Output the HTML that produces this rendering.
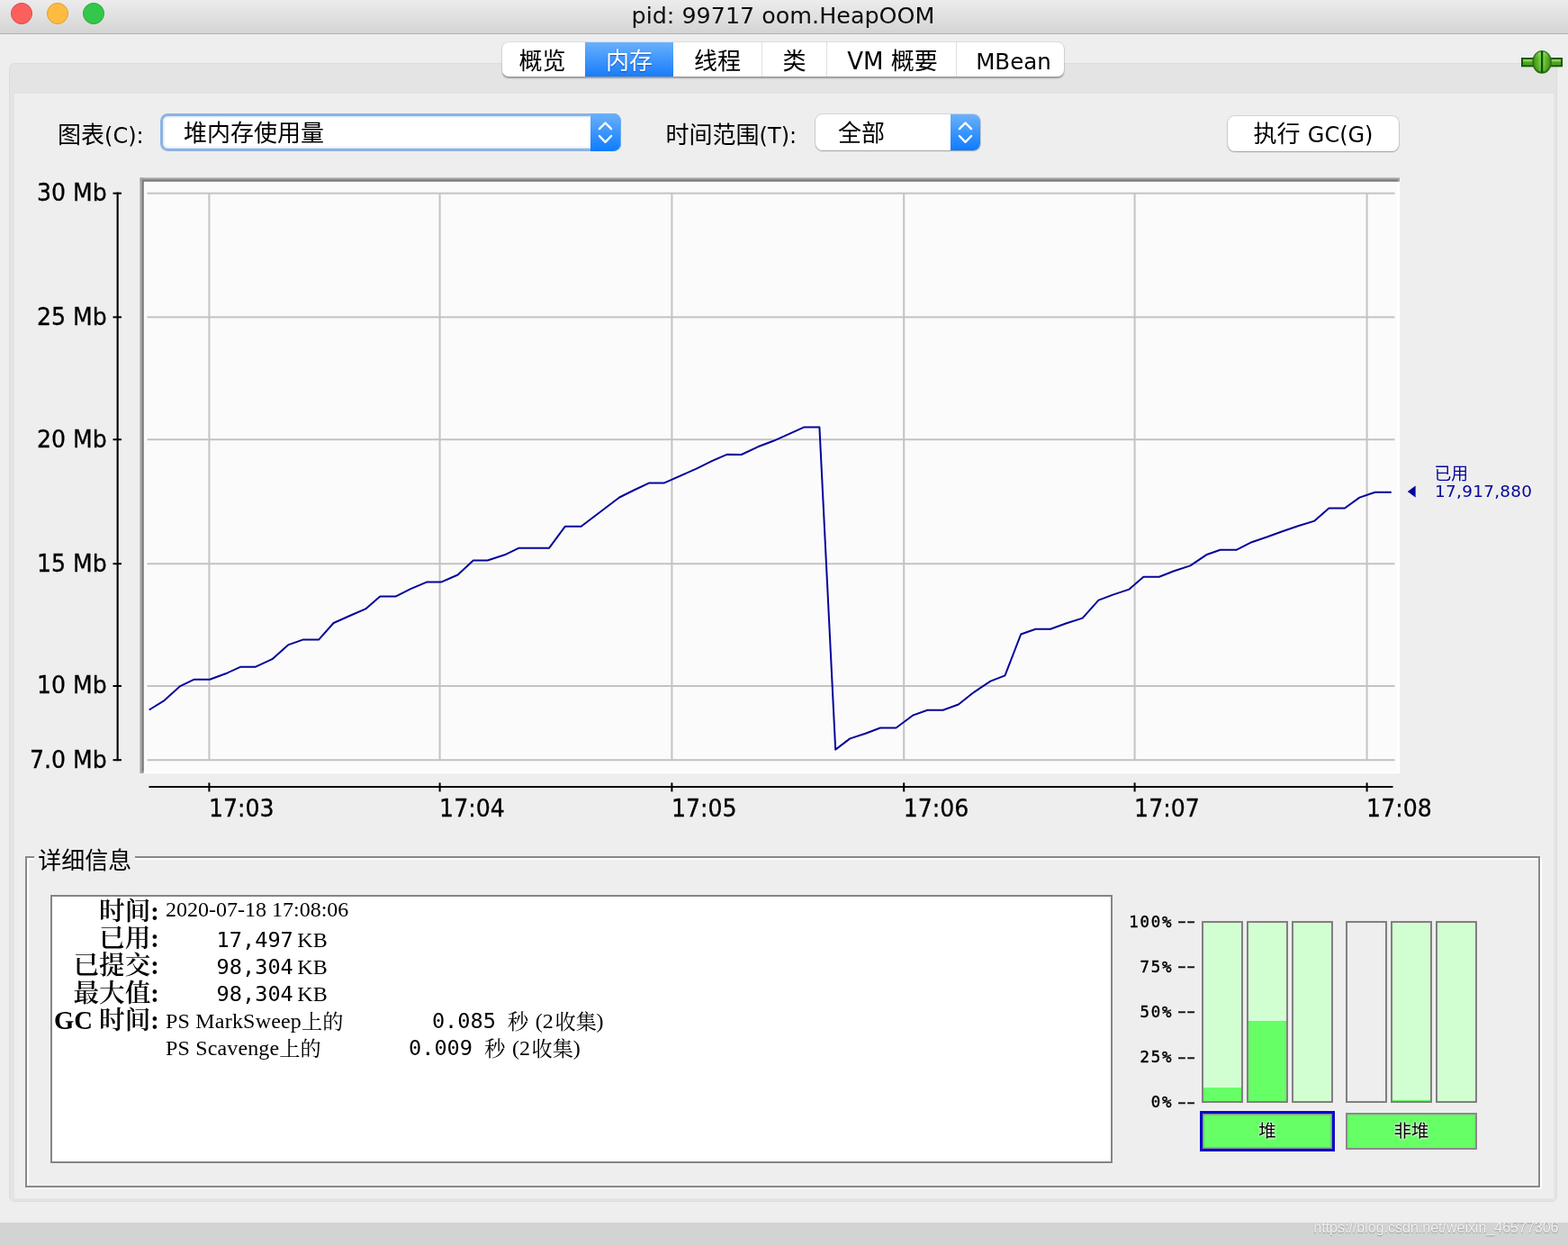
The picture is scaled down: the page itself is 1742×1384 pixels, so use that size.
<!DOCTYPE html>
<html lang="zh">
<head>
<meta charset="utf-8">
<title>pid: 99717 oom.HeapOOM</title>
<style>
html,body{margin:0;padding:0;}
body{width:1742px;height:1384px;overflow:hidden;background:#eeeeee;position:relative;
  font-family:"DejaVu Sans","Liberation Sans","Noto Sans CJK SC",sans-serif;color:#000;}
.abs{position:absolute;}
.ui{font-family:"DejaVu Sans","Liberation Sans","Noto Sans CJK SC",sans-serif;font-size:26px;line-height:30px;white-space:nowrap;}
.lat{font-size:24px;}
/* title bar */
#titlebar{left:0;top:0;width:1742px;height:37px;background:linear-gradient(#ececec,#d4d4d4);border-bottom:1px solid #b1b1b1;}
#title{left:-1px;top:0;width:1742px;text-align:center;font-size:25.4px;line-height:34px;color:#0c0c0c;white-space:nowrap;}
.tl{width:24px;height:24px;border-radius:50%;top:3px;box-sizing:border-box;}
/* tab panel */
#panel{left:10px;top:70px;width:1720px;height:1265px;background:#e4e4e4;border-radius:6px;box-sizing:border-box;border:1px solid #dcdcdc;}
#inner{left:16px;top:104px;width:1710px;height:1227px;background:#eeeeee;}
/* tabs */
#tabs{left:558px;top:46.6px;width:624px;height:38.8px;border-radius:7px;background:#fff;box-shadow:0 0 0 0.7px rgba(0,0,0,.09),0 1.2px 1.6px rgba(0,0,0,.3);overflow:hidden;}
.tab{top:0;height:38.8px;text-align:center;font-size:26px;line-height:43.6px;white-space:nowrap;box-sizing:border-box;border-left:1px solid #dfdfdf;}
.tab.first{border-left:none;}
.tab.sel{background:linear-gradient(#6ab1fb,#4399fb 45%,#1a7cfa);color:#fff;border-left:none;text-shadow:0 1px 1.5px rgba(0,40,120,.55);}
/* combos */
.combo{background:#fff;border-radius:7px;box-sizing:border-box;box-shadow:0 0 0 1px rgba(0,0,0,.14),0 1.5px 2px rgba(0,0,0,.2);}
.combo .btn{position:absolute;right:0;top:0;bottom:0;width:34px;border-radius:0 7px 7px 0;background:linear-gradient(#58a7fb,#1776f8);}
.combo .txt{position:absolute;top:0;font-size:26px;line-height:40px;white-space:nowrap;}
</style>
</head>
<body><div id="root" style="position:absolute;left:0;top:0;width:1742px;height:1384px;will-change:transform;">
<div id="titlebar" class="abs"></div>
<div class="abs tl" style="left:12px;background:#fc605c;border:1px solid #df4744;"></div>
<div class="abs tl" style="left:52px;background:#fdbc40;border:1px solid #de9f34;"></div>
<div class="abs tl" style="left:92px;background:#34c84a;border:1px solid #27aa35;"></div>
<div id="title" class="abs">pid: 99717 oom.HeapOOM</div>

<div id="panel" class="abs"></div>
<div id="inner" class="abs"></div>

<div id="tabs" class="abs">
  <div class="abs tab first" style="left:0;width:89px;">概览</div>
  <div class="abs tab sel" style="left:92px;width:98px;">内存</div>
  <div class="abs tab" style="left:190px;width:98px;border-left:none;">线程</div>
  <div class="abs tab" style="left:288px;width:72px;">类</div>
  <div class="abs tab" style="left:360px;width:144px;padding-left:2px;">VM 概要</div>
  <div class="abs tab" style="left:504px;width:120px;font-size:24.5px;padding-left:7px;">MBean</div>
</div>

<!-- SECTION:controls -->
<div class="abs ui" style="left:64px;top:134.6px;">图表<span class="lat">(C):</span></div>
<div class="abs" style="left:178px;top:126px;width:512px;height:42px;box-sizing:border-box;border:3px solid #8cb3e3;border-radius:8.5px;background:#fff;box-shadow:inset 0 0 2.5px 1px #cde0f7;">
  <div class="abs ui" style="left:23px;top:4.2px;">堆内存使用量</div>
  <div class="abs" style="right:-3px;top:-3px;width:34px;height:42px;border-radius:0 8.5px 8.5px 0;background:linear-gradient(#6cb2fb,#3f98fd 45%,#0d7cff);box-shadow:inset -1px 0 0 #6aaaf3;"><svg class="abs" style="left:0;top:0" width="34" height="42" viewBox="0 0 34 42"><path d="M9.9 17.2 L16.5 10.5 L23.1 17.2 M9.9 25 L16.5 31.8 L23.1 25" fill="none" stroke="#fff" stroke-width="2.4" stroke-linecap="round" stroke-linejoin="round"/></svg></div>
</div>
<div class="abs ui" style="left:739.6px;top:134.6px;">时间范围<span class="lat">(T):</span></div>
<div class="abs" style="left:906px;top:127px;width:183px;height:40px;border-radius:7.5px;background:#fff;box-shadow:0 0 0 0.8px rgba(0,0,0,.15),0 1px 1.3px rgba(0,0,0,.24);">
  <div class="abs ui" style="left:25px;top:6.2px;">全部</div>
  <div class="abs" style="right:0;top:0;width:33px;height:40px;border-radius:0 7.5px 7.5px 0;background:linear-gradient(#6cb2fb,#3f98fd 45%,#0d7cff);overflow:hidden;"><svg class="abs" style="left:0;top:-1px" width="34" height="42" viewBox="0 0 34 42"><path d="M9.9 17.2 L16.5 10.5 L23.1 17.2 M9.9 25 L16.5 31.8 L23.1 25" fill="none" stroke="#fff" stroke-width="2.4" stroke-linecap="round" stroke-linejoin="round"/></svg></div>
</div>
<div class="abs ui" style="left:1364px;top:129px;width:190px;height:39px;text-align:center;line-height:40px;border-radius:7.5px;background:#fff;box-shadow:0 0 0 0.8px rgba(0,0,0,.15),0 1px 1.3px rgba(0,0,0,.24);">执行 <span class="lat">GC(G)</span></div>
<!-- connection icon -->
<svg class="abs" style="left:1686px;top:52px;" width="54" height="34" viewBox="1686 52 54 34">
  <defs>
    <linearGradient id="gbar" x1="0" y1="0" x2="0" y2="1"><stop offset="0" stop-color="#a2ec72"/><stop offset="0.35" stop-color="#7ccc44"/><stop offset="0.55" stop-color="#4f9c1c"/><stop offset="1" stop-color="#58a826"/></linearGradient>
    <linearGradient id="gball" x1="0" y1="0" x2="1" y2="0"><stop offset="0" stop-color="#3f8f16"/><stop offset="0.3" stop-color="#62b82c"/><stop offset="0.42" stop-color="#86d850"/><stop offset="0.58" stop-color="#86d850"/><stop offset="0.7" stop-color="#62b82c"/><stop offset="1" stop-color="#3f8f16"/></linearGradient>
    <linearGradient id="gshade" x1="0" y1="0" x2="0" y2="1"><stop offset="0" stop-color="#b8ff8a" stop-opacity=".55"/><stop offset="0.4" stop-color="#6fc23a" stop-opacity="0"/><stop offset="1" stop-color="#1f5f08" stop-opacity=".35"/></linearGradient>
  </defs>
  <rect x="1691" y="65" width="44" height="8.3" fill="url(#gbar)" stroke="#0e5a02" stroke-width="2"/>
  <ellipse cx="1713.1" cy="68.9" rx="9.9" ry="12" fill="url(#gball)" stroke="#2f7014" stroke-width="1.8"/>
  <ellipse cx="1713.1" cy="68.9" rx="9.9" ry="12" fill="url(#gshade)"/>
  <rect x="1711.9" y="57" width="2.4" height="24" fill="#0b5402"/>
</svg>
<!-- SECTION:chart -->
<svg class="abs" style="left:0;top:180px;" width="1742" height="750" viewBox="0 180 1742 750" font-family="'DejaVu Sans','Liberation Sans','Noto Sans CJK SC',sans-serif">
<rect x="155.4" y="197.4" width="1399.8" height="661.8" fill="#ffffff"/>
<rect x="155.4" y="197.4" width="1399.6" height="4.4" fill="#a4a4a4"/><rect x="157.8" y="199.6" width="1395" height="2.2" fill="#787878"/>
<rect x="155.4" y="197.4" width="4.4" height="661.6" fill="#a4a4a4"/><rect x="157.8" y="199.6" width="2.1" height="657" fill="#787878"/>
<rect x="159.8" y="201.8" width="1392.5" height="654.4" fill="#fbfbfb"/>
<rect x="163.5" y="213.7" width="1386" height="2" fill="#c3c3c3"/>
<rect x="163.5" y="351.3" width="1386" height="2" fill="#c3c3c3"/>
<rect x="163.5" y="487.2" width="1386" height="2" fill="#c3c3c3"/>
<rect x="163.5" y="625.2" width="1386" height="2" fill="#c3c3c3"/>
<rect x="163.5" y="761.0" width="1386" height="2" fill="#c3c3c3"/>
<rect x="163.5" y="843.2" width="1386" height="2" fill="#c3c3c3"/>
<rect x="231.4" y="214" width="2" height="631" fill="#c3c3c3"/>
<rect x="487.6" y="214" width="2" height="631" fill="#c3c3c3"/>
<rect x="745.4" y="214" width="2" height="631" fill="#c3c3c3"/>
<rect x="1003.2" y="214" width="2" height="631" fill="#c3c3c3"/>
<rect x="1259.6" y="214" width="2" height="631" fill="#c3c3c3"/>
<rect x="1517.6" y="214" width="2" height="631" fill="#c3c3c3"/>
<rect x="129.6" y="213.6" width="2.1" height="631.6" fill="#000"/>
<rect x="125.5" y="213.7" width="9.5" height="2" fill="#000"/>
<text transform="translate(118.8,223.1) scale(1,1.065)" font-size="25.2" text-anchor="end" fill="#000" stroke="#000" stroke-width="0.3">30 Mb</text>
<rect x="125.5" y="351.3" width="9.5" height="2" fill="#000"/>
<text transform="translate(118.8,360.7) scale(1,1.065)" font-size="25.2" text-anchor="end" fill="#000" stroke="#000" stroke-width="0.3">25 Mb</text>
<rect x="125.5" y="487.2" width="9.5" height="2" fill="#000"/>
<text transform="translate(118.8,496.6) scale(1,1.065)" font-size="25.2" text-anchor="end" fill="#000" stroke="#000" stroke-width="0.3">20 Mb</text>
<rect x="125.5" y="625.2" width="9.5" height="2" fill="#000"/>
<text transform="translate(118.8,634.6) scale(1,1.065)" font-size="25.2" text-anchor="end" fill="#000" stroke="#000" stroke-width="0.3">15 Mb</text>
<rect x="125.5" y="761.0" width="9.5" height="2" fill="#000"/>
<text transform="translate(118.8,770.4) scale(1,1.065)" font-size="25.2" text-anchor="end" fill="#000" stroke="#000" stroke-width="0.3">10 Mb</text>
<rect x="125.5" y="843.2" width="9.5" height="2" fill="#000"/>
<text transform="translate(118.8,852.6) scale(1,1.065)" font-size="25.2" text-anchor="end" fill="#000" stroke="#000" stroke-width="0.3">7.0 Mb</text>
<rect x="165.5" y="873" width="1382" height="2" fill="#000"/>
<rect x="231.4" y="869.4" width="2" height="10" fill="#000"/>
<text transform="translate(231.9,907.3) scale(1,1.05)" font-size="25.2" fill="#000" stroke="#000" stroke-width="0.3">17:03</text>
<rect x="487.6" y="869.4" width="2" height="10" fill="#000"/>
<text transform="translate(488.1,907.3) scale(1,1.05)" font-size="25.2" fill="#000" stroke="#000" stroke-width="0.3">17:04</text>
<rect x="745.4" y="869.4" width="2" height="10" fill="#000"/>
<text transform="translate(745.9,907.3) scale(1,1.05)" font-size="25.2" fill="#000" stroke="#000" stroke-width="0.3">17:05</text>
<rect x="1003.2" y="869.4" width="2" height="10" fill="#000"/>
<text transform="translate(1003.7,907.3) scale(1,1.05)" font-size="25.2" fill="#000" stroke="#000" stroke-width="0.3">17:06</text>
<rect x="1259.6" y="869.4" width="2" height="10" fill="#000"/>
<text transform="translate(1260.1,907.3) scale(1,1.05)" font-size="25.2" fill="#000" stroke="#000" stroke-width="0.3">17:07</text>
<rect x="1517.6" y="869.4" width="2" height="10" fill="#000"/>
<text transform="translate(1518.1,907.3) scale(1,1.05)" font-size="25.2" fill="#000" stroke="#000" stroke-width="0.3">17:08</text>
<polyline points="165.7,788.5 182.5,778.1 200.2,762.1 215.8,754.7 233.0,754.7 250.7,748.3 267.5,740.7 284.0,740.7 302.4,732.2 320.0,716.4 336.3,710.6 354.0,710.6 370.6,692.0 388.5,684.0 406.1,676.4 422.2,662.6 439.4,662.6 456.2,654.1 473.9,646.6 490.0,646.6 508.6,638.5 525.8,622.5 541.6,622.5 560.7,616.3 576.1,608.8 592.8,608.8 610.0,608.8 627.9,584.7 645.6,584.7 688.1,552.5 704.2,544.5 721.4,536.4 737.5,536.6 774.2,520.4 790.3,512.3 807.5,504.8 823.6,505.0 842.0,496.3 859.2,489.8 893.6,474.4 910.4,474.4 928.2,832.6 944.3,820.4 961.5,814.7 978.0,808.5 995.5,808.5 1014.3,794.5 1030.4,788.7 1047.6,788.7 1064.8,782.5 1082.1,768.8 1100.4,756.6 1116.5,750.4 1134.2,704.5 1150.5,698.7 1167.0,698.7 1184.9,692.3 1202.6,686.6 1220.5,666.6 1237.1,660.4 1254.5,654.6 1270.4,640.8 1287.8,640.7 1304.3,634.3 1322.3,628.4 1340.1,616.3 1355.7,610.8 1373.5,610.8 1390.6,602.2 1408.1,596.3 1424.6,590.2 1442.1,584.3 1460.4,578.6 1476.4,564.5 1493.9,564.5 1510.4,552.6 1527.8,546.7 1545.8,546.7" fill="none" stroke="#05059a" stroke-width="2" stroke-linejoin="round"/>
<path d="M1563.8 546 L1572.6 539.6 L1572.6 552.4 Z" fill="#05059a"/>
<text x="1593.4" y="533.2" font-size="18.8" fill="#05059a">已用</text>
<text x="1594" y="552" font-size="18.4" letter-spacing="0.3" fill="#05059a">17,917,880</text>
</svg>
<!-- SECTION:details -->
<div class="abs" style="left:30px;top:953px;width:1683px;height:368px;border:2px solid #fff;box-sizing:border-box;"></div>
<div class="abs" style="left:28px;top:951px;width:1683px;height:368px;border:2px solid #888;box-sizing:border-box;"></div>
<div class="abs" style="left:37.6px;top:948px;width:112.4px;height:10px;background:#eeeeee;"></div>
<div class="abs ui" style="left:42.3px;top:940.6px;">详细信息</div>
<div class="abs" style="left:56px;top:994px;width:1180px;height:297.5px;background:#fff;border:2px solid #858585;box-sizing:border-box;"></div>
<svg class="abs" style="left:56px;top:994px;" width="1180" height="298" viewBox="56 994 1180 298" font-family="'Liberation Serif','Noto Serif CJK SC',serif" font-size="24" fill="#000">
<text x="176.8" y="1021.9" font-size="28.6" font-weight="600" text-anchor="end">时间:</text>
<text x="176.8" y="1052.3" font-size="28.6" font-weight="600" text-anchor="end">已用:</text>
<text x="176.8" y="1082.4" font-size="28.6" font-weight="600" text-anchor="end">已提交:</text>
<text x="176.8" y="1112.5" font-size="28.6" font-weight="600" text-anchor="end">最大值:</text>
<text x="176.8" y="1142.6" font-size="28.6" font-weight="600" text-anchor="end">GC 时间:</text>
<text x="184" y="1017.7">2020-07-18 17:08:06</text>
<text x="240.6" y="1051.7" font-family="'DejaVu Sans Mono','Liberation Mono',monospace" font-size="23.6">17,497</text>
<text x="330.3" y="1051.7">KB</text>
<text x="240.6" y="1081.8" font-family="'DejaVu Sans Mono','Liberation Mono',monospace" font-size="23.6">98,304</text>
<text x="330.3" y="1081.8">KB</text>
<text x="240.6" y="1111.9" font-family="'DejaVu Sans Mono','Liberation Mono',monospace" font-size="23.6">98,304</text>
<text x="330.3" y="1111.9">KB</text>
<text x="184" y="1142.0" letter-spacing="0.2">PS MarkSweep<tspan font-size="23.2" dy="0.6" letter-spacing="0">上的</tspan></text>
<text x="479.9" y="1142.0" font-family="'DejaVu Sans Mono','Liberation Mono',monospace" font-size="23.6">0.085</text>
<text x="564.1" y="1142.6" font-size="23.2">秒</text>
<text x="594.8" y="1142.0">(2</text>
<text x="616.5" y="1142.6" font-size="23.2">收集</text>
<text x="662.6" y="1142.0">)</text>
<text x="184" y="1172.1" letter-spacing="0.15">PS Scavenge<tspan font-size="23.2" dy="0.6" letter-spacing="0">上的</tspan></text>
<text x="454.0" y="1172.1" font-family="'DejaVu Sans Mono','Liberation Mono',monospace" font-size="23.6">0.009</text>
<text x="538.2" y="1172.7" font-size="23.2">秒</text>
<text x="568.9" y="1172.1">(2</text>
<text x="590.6" y="1172.7" font-size="23.2">收集</text>
<text x="636.7" y="1172.1">)</text>
</svg>
<!-- SECTION:bars -->
<svg class="abs" style="left:1240px;top:1000px;" width="420" height="300" viewBox="1240 1000 420 300">
<rect x="1336" y="1024" width="44" height="200" fill="#d2ffd2" stroke="#808080" stroke-width="2"/>
<rect x="1337" y="1208.0" width="42" height="15.0" fill="#66ff66"/>
<rect x="1386" y="1024" width="44" height="200" fill="#d2ffd2" stroke="#808080" stroke-width="2"/>
<rect x="1387" y="1134.0" width="42" height="89.0" fill="#66ff66"/>
<rect x="1436" y="1024" width="44" height="200" fill="#d2ffd2" stroke="#808080" stroke-width="2"/>
<rect x="1496" y="1024" width="44" height="200" fill="#eeeeee" stroke="#808080" stroke-width="2"/>
<rect x="1546" y="1024" width="44" height="200" fill="#d2ffd2" stroke="#808080" stroke-width="2"/>
<rect x="1547" y="1221.8" width="42" height="1.2" fill="#66ff66"/>
<rect x="1596" y="1024" width="44" height="200" fill="#d2ffd2" stroke="#808080" stroke-width="2"/>
<text x="1303.4" y="1029.9" text-anchor="end" font-family="'DejaVu Sans Mono','Liberation Mono',monospace" font-size="17.4" letter-spacing="1.8" fill="#000" stroke="#000" stroke-width="0.45">100%</text>
<text transform="translate(1304.3,1030.3) scale(1.52,1)" font-family="'DejaVu Sans Mono','Liberation Mono',monospace" font-size="19" letter-spacing="-4.8" fill="#111" stroke="#111" stroke-width="0.3">--</text>
<text x="1303.4" y="1079.8" text-anchor="end" font-family="'DejaVu Sans Mono','Liberation Mono',monospace" font-size="17.4" letter-spacing="1.8" fill="#000" stroke="#000" stroke-width="0.45">75%</text>
<text transform="translate(1304.3,1080.2) scale(1.52,1)" font-family="'DejaVu Sans Mono','Liberation Mono',monospace" font-size="19" letter-spacing="-4.8" fill="#111" stroke="#111" stroke-width="0.3">--</text>
<text x="1303.4" y="1130.0" text-anchor="end" font-family="'DejaVu Sans Mono','Liberation Mono',monospace" font-size="17.4" letter-spacing="1.8" fill="#000" stroke="#000" stroke-width="0.45">50%</text>
<text transform="translate(1304.3,1130.4) scale(1.52,1)" font-family="'DejaVu Sans Mono','Liberation Mono',monospace" font-size="19" letter-spacing="-4.8" fill="#111" stroke="#111" stroke-width="0.3">--</text>
<text x="1303.4" y="1180.1" text-anchor="end" font-family="'DejaVu Sans Mono','Liberation Mono',monospace" font-size="17.4" letter-spacing="1.8" fill="#000" stroke="#000" stroke-width="0.45">25%</text>
<text transform="translate(1304.3,1180.5) scale(1.52,1)" font-family="'DejaVu Sans Mono','Liberation Mono',monospace" font-size="19" letter-spacing="-4.8" fill="#111" stroke="#111" stroke-width="0.3">--</text>
<text x="1303.4" y="1230.1" text-anchor="end" font-family="'DejaVu Sans Mono','Liberation Mono',monospace" font-size="17.4" letter-spacing="1.8" fill="#000" stroke="#000" stroke-width="0.45">0%</text>
<text transform="translate(1304.3,1230.5) scale(1.52,1)" font-family="'DejaVu Sans Mono','Liberation Mono',monospace" font-size="19" letter-spacing="-4.8" fill="#111" stroke="#111" stroke-width="0.3">--</text>
</svg>
<div class="abs" style="left:1333px;top:1233.5px;width:150px;height:45px;box-sizing:border-box;border:3px solid #0a0ac8;background:#66ff66;box-shadow:inset 0 0 0 1.5px #8c8c8c;font-size:19.5px;line-height:40px;text-align:center;text-shadow:0 0 2px #fff,0 0 2px #fff,0 0 3px #fff;">堆</div>
<div class="abs" style="left:1495px;top:1235.5px;width:146px;height:41.5px;box-sizing:border-box;border:2px solid #8a8a8a;background:#66ff66;font-size:19.5px;line-height:38.5px;text-align:center;text-shadow:0 0 2px #fff,0 0 2px #fff,0 0 3px #fff;">非堆</div>
<!-- SECTION:footer -->
<div class="abs" style="left:0;top:1358px;width:1742px;height:26px;background:#d3d3d3;"></div>
<div class="abs" style="right:10.5px;top:1354.4px;font-family:'Liberation Sans',sans-serif;font-size:16px;line-height:20px;color:#f4f4f4;text-shadow:0 1px 1px rgba(0,0,0,.28),0 0 1px rgba(0,0,0,.2);white-space:nowrap;">https://blog.csdn.net/weixin_46577306</div>
</div></body>
</html>
